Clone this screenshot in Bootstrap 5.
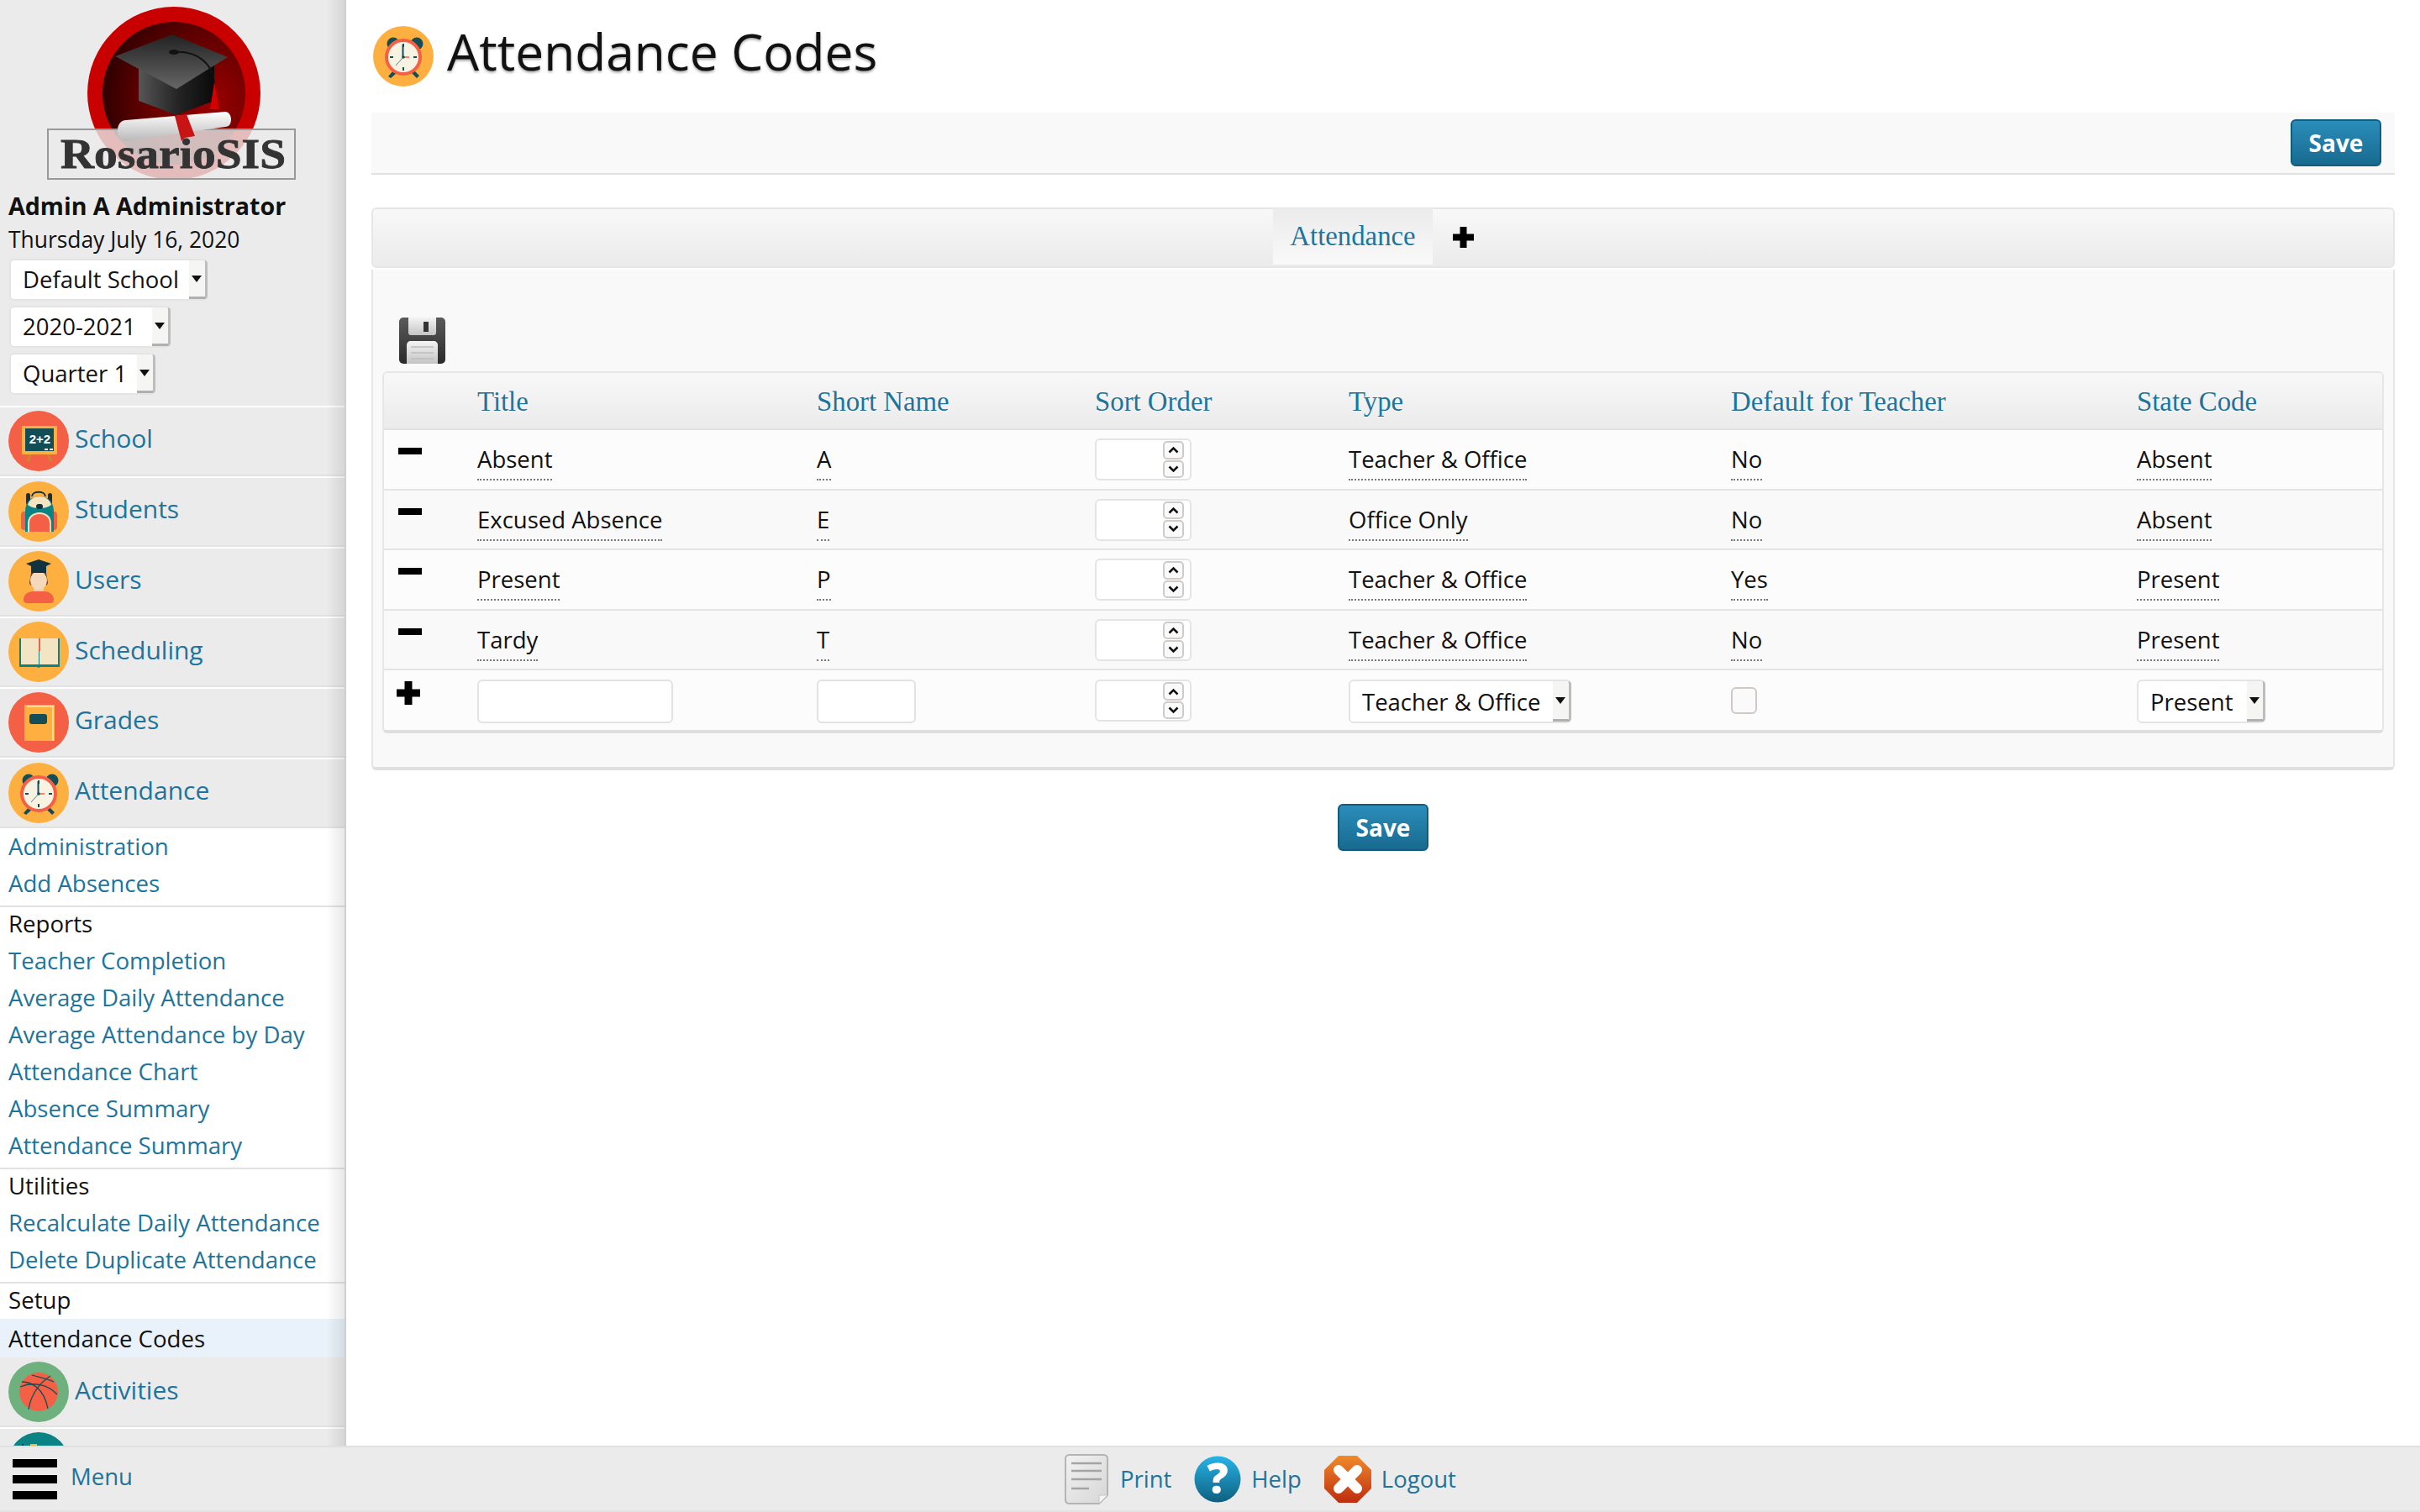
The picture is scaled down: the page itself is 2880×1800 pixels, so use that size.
<!DOCTYPE html>
<html lang="en">
<head>
  <meta charset="UTF-8">
  <title>Attendance Codes - RosarioSIS</title>
  <link rel="stylesheet" href="https://cdn.jsdelivr.net/npm/bootstrap@5.3.0/dist/css/bootstrap.min.css">
  <style>
    html, body { height: 100%; }
    body {
      background: #fff;
      color: #111;
      font-family: "Open Sans", "Liberation Sans", sans-serif;
      font-size: 27.5px;
      overflow: hidden;
    }
    a { color: #20749c; text-decoration: none; }
    .app-shell { height: 1800px; }
    .side-col {
      width: 412px;
      height: 1721px;
      background: #fff;
      position: relative;
      overflow: hidden;
      flex: none;
      border-right: 2px solid #cfcfcf;
    }
    .side-col::after {
      content: "";
      position: absolute;
      top: 0;
      bottom: 0;
      right: 0;
      width: 22px;
      background: linear-gradient(to right, rgba(0,0,0,0), rgba(0,0,0,.09));
    }
    .side-top { background: #ebebeb; height: 483px; }
    .logo-svg { display: block; }
    .admin-name { font-weight: 700; font-size: 28.6px; line-height: 40px; padding-left: 10px; margin-top: 3px; }
    .today-line { font-size: 26.4px; line-height: 40px; padding-left: 10px; margin-bottom: 3px; }
    .side-selects { padding-left: 11px; gap: 6px; }
    .sel-wrap { position: relative; }
    .sel-w-school { width: 236px; }
    .sel-w-year { width: 192px; }
    .sel-w-term { width: 174px; }
    .sel-w-type { width: 265px; }
    .sel-w-state { width: 153px; }
    select.form-select.sel-plain {
      appearance: none;
      background-image: none;
      background-color: #fff;
      border: 2px solid #e4e4e4;
      border-radius: 6px;
      color: #111;
      font-size: 27.5px;
      line-height: 1;
      height: 50px;
      width: 100%;
      padding: 0 24px 0 14px;
      box-shadow: none;
    }
    .sel-wrap.in-table select.form-select.sel-plain { height: 52px; }
    .sel-caret {
      position: absolute;
      top: 2px;
      right: 0;
      bottom: 2px;
      width: 22px;
      background: #f5f5f4;
      border-right: 3px solid #bdbdbd;
      border-bottom: 3px solid #b0b0b0;
      border-top-right-radius: 4px;
      border-bottom-right-radius: 4px;
      pointer-events: none;
    }
    .sel-caret::after {
      content: "";
      position: absolute;
      top: 42%;
      left: 3px;
      border-left: 6px solid transparent;
      border-right: 6px solid transparent;
      border-top: 8px solid #111;
    }
    .menu-head {
      height: 83.75px;
      background: #ebebeb;
      border-top: 2px solid #fff;
      border-bottom: 2px solid #e2e2e2;
      padding-left: 10px;
      font-size: 30px;
      gap: 7px;
    }
    .menu-head svg { width: 72px; height: 72px; flex: none; }
    .menu-head span { margin-bottom: 6px; }
    .menu-head.after-sub { border-top-color: #ebebeb; }
    .menu-sub { padding-bottom: 4px; background: #fff; }
    .menu-sub a, .menu-sub .menu-label {
      display: block;
      height: 44px;
      line-height: 43px;
      padding-left: 10px;
      font-size: 27.6px;
    }
    .menu-sub .menu-label {
      color: #111;
      border-top: 2px solid #e2e2e2;
      line-height: 39px;
    }
    .menu-sub a.is-current { background: #e9f2fa; color: #111; height: 46px; line-height: 46px; }
    .menu-sub.last-sub { padding-bottom: 0; }
    .main-col { padding: 0 30px; flex: 1 1 auto; min-width: 0; }
    .page-title { height: 134px; padding-left: 2px; gap: 16px; }
    .page-title svg { width: 72px; height: 72px; }
    .page-title h1 {
      font-size: 60.4px;
      font-weight: 400;
      margin: 0 0 12px;
      text-shadow: 0 2px 3px rgba(0,0,0,.35);
    }
    .top-bar {
      height: 74px;
      background: #f9f9f9;
      border-bottom: 2px solid #e2e2e2;
      padding-right: 16px;
    }
    .btn.save-btn {
      width: 108px;
      height: 56px;
      padding: 0;
      color: #fff;
      font-size: 28px;
      font-weight: 700;
      background: linear-gradient(#2b8dbb, #186a8f);
      border: 2px solid #125c7c;
      border-radius: 6px;
      line-height: 1;
    }
    .tab-strip {
      margin-top: 39px;
      height: 72px;
      background: linear-gradient(#f8f8f8, #ebebeb);
      border: 2px solid #e6e6e6;
      border-radius: 6px;
    }
    .tab-active {
      height: 67px;
      width: 190px;
      margin-top: -1px;
      background: linear-gradient(#ebebeb, #f9f9f9);
      font-family: "Liberation Serif", serif;
      font-size: 32.8px;
      line-height: 66px;
      text-align: center;
      text-shadow: 0 1px 0 #fff;
    }
    .tab-plus { padding: 21px 23px 0 24px; }
    .tab-plus svg { display: block; width: 25px; height: 25px; }
    .code-panel {
      margin-top: 2px;
      height: 596px;
      background: #f9f9f9;
      border: 2px solid #e6e6e6;
      border-top: 0;
      border-bottom: 4px solid #e0e0e0;
      border-radius: 0 0 6px 6px;
      padding: 57px 11px 0;
    }
    .disk-icon { display: block; width: 55px; height: 55px; margin-left: 20px; margin-bottom: 9px; }
    .code-wrap {
      border: 2px solid #e6e6e6;
      border-bottom: 4px solid #dedede;
      border-radius: 6px;
      overflow: hidden;
    }
    .code-table { table-layout: fixed; margin: 0; width: 100%; }
    .code-table .cw-1 { width: 95px; }
    .code-table .cw-2 { width: 404px; }
    .code-table .cw-3 { width: 331px; }
    .code-table .cw-4 { width: 302px; }
    .code-table .cw-5 { width: 455px; }
    .code-table .cw-6 { width: 483px; }
    .code-table th {
      height: 67px;
      padding: 3px 16px 0;
      vertical-align: middle;
      background: linear-gradient(#f8f8f8, #ebebeb);
      border-bottom: 2px solid #e2e2e2;
      color: #20749c;
      font-family: "Liberation Serif", serif;
      font-size: 32.8px;
      font-weight: 400;
      text-shadow: 0 1px 0 #fff;
    }
    .code-table td {
      height: 71.6px;
      padding: 14px 16px 0;
      vertical-align: top;
      font-size: 27.5px;
      color: #111;
      background: #f9f9f9;
      border-bottom: 2px solid #e4e4e4;
      box-shadow: none;
    }
    .code-table tr:nth-child(odd) td { background: #fbfcfb; }
    .code-table tr:last-child td { border-bottom: 0; padding-top: 11px; }
    .code-table td.cell-num { padding-top: 10px; }
    .code-table td.cell-act { padding: 21px 0 0 17px; }
    .code-table tr:last-child td.cell-act { padding: 13px 0 0 15px; }
    .dash-icon { display: block; width: 28px; height: 8px; background: #000; }
    .plus-icon { display: block; width: 28px; height: 28px; }
    .dot-val {
      display: inline-block;
      line-height: 38px;
      padding-bottom: 4px;
      border-bottom: 2px dotted #777;
    }
    .num-box {
      width: 115px;
      height: 50px;
      background: #fff;
      border: 2px solid #e4e4e4;
      border-radius: 6px;
      padding: 1px 7px 1px 0;
    }
    .num-box input { border: 0; background: transparent; width: 0; flex: 1 1 auto; outline: 0; }
    .spin-col { width: 25px; gap: 1px; }
    .spin-btn {
      height: 22px;
      border: 2px solid #cfcbc8;
      border-radius: 5px;
      background: #fafafa;
    }
    .spin-btn svg { width: 13px; height: 9px; }
    .text-in {
      display: block;
      height: 52px;
      background: #fff;
      border: 2px solid #e2e2e2;
      border-radius: 6px;
      outline: 0;
    }
    .text-in.wide { width: 233px; }
    .text-in.narrow { width: 118px; }
    .box-check {
      appearance: none;
      display: block;
      width: 31px;
      height: 32px;
      margin-top: 9px;
      background: #fbfafa;
      border: 2px solid #cfc9c6;
      border-radius: 6px;
    }
    .bottom-save { margin-top: 40px; }
    .foot-bar {
      position: relative;
      height: 79px;
      background: #ebebeb;
      border-top: 2px solid #e0e0e0;
      border-bottom: 2px solid #e4e4e4;
      font-size: 27.5px;
    }
    .burger { width: 53px; margin-left: 15px; gap: 9px; }
    .burger span { display: block; height: 10px; background: #000; }
    .foot-menu { margin-left: 16px; margin-top: -6px; }
    .foot-links { margin-left: 1109px; }
    .foot-links a { gap: 12px; }
    .foot-links a + a { margin-left: 27px; }
    .foot-links .ic-print { width: 52px; height: 60px; margin-right: 2px; }
    .foot-links .ic-round { width: 56px; height: 56px; overflow: visible; }
  </style>
</head>
<body>
  <svg width="0" height="0" class="position-absolute">
    <defs>
      <symbol id="ic-school" viewBox="0 0 72 72">
        <circle cx="36" cy="36" r="36" fill="#f46046"/>
        <path d="M24 52l-2 8h3l2-8zM46 52l3 8h3l-3-8z" fill="#c98a2a"/>
        <rect x="16" y="18" width="42" height="34" rx="1" fill="#fdb03f"/>
        <rect x="20" y="21" width="34" height="27" fill="#134e57"/>
        <text x="37.500" y="39" text-anchor="middle" font-family="Liberation Sans" font-weight="700" font-size="15" fill="#fff">2+2</text>
        <rect x="43" y="45" width="4" height="2" fill="#fff"/><rect x="49" y="45" width="4" height="2" fill="#fff"/>
      </symbol>
      <symbol id="ic-students" viewBox="0 0 72 72">
        <circle cx="36" cy="36" r="36" fill="#fdb03f"/>
        <path d="M28 18c0-7 16-7 16 0" fill="none" stroke="#10333f" stroke-width="2"/>
        <rect x="15" y="36" width="9" height="22" rx="4" fill="#f46046"/><rect x="49" y="36" width="9" height="22" rx="4" fill="#f46046"/>
        <rect x="21" y="14" width="5" height="14" rx="2.5" fill="#10333f"/><rect x="47" y="14" width="5" height="14" rx="2.5" fill="#10333f"/>
        <path d="M20 60V36c0-12 7-18 17-18s17 6 17 18v24z" fill="#0b8384"/>
        <path d="M23 28c2-7 8-10 14-10s12 3 14 10c-4 3-9 4-14 4s-10-1-14-4z" fill="#f3e4c3"/>
        <rect x="33" y="27" width="8" height="6" rx="3" fill="#10333f"/>
        <path d="M23 60V50c0-8 6-13 14-13s14 5 14 13v10z" fill="#f3e4c3"/>
        <path d="M25 60V50c0-7 5-11 12-11s12 4 12 11v10z" fill="#f46046"/>
      </symbol>
      <symbol id="ic-users" viewBox="0 0 72 72">
        <circle cx="36" cy="36" r="36" fill="#fdb03f"/>
        <path d="M18 58c0-7 6-10 12-10h12c6 0 12 3 12 10 0 3-2 4-4 4H22c-2 0-4-1-4-4z" fill="#f46046"/>
        <rect x="30" y="42" width="12" height="6" fill="#e9cdb0"/>
        <path d="M27 26h18l2 12c-1 3-2 3-3 2H28c-1 1-2 1-3-2z" fill="#6a3f2c"/>
        <ellipse cx="36" cy="35" rx="10" ry="11" fill="#f6d9bb"/>
        <path d="M21 15l15-5 15 5-6 3v8H27v-8z" fill="#10333f"/>
      </symbol>
      <symbol id="ic-book" viewBox="0 0 72 72">
        <circle cx="36" cy="36" r="36" fill="#fdb03f"/>
        <path d="M13 20h48v34H38l-2 1-2-1H13z" fill="#0b8384"/>
        <rect x="15" y="20" width="21" height="31" fill="#f3e4c3"/>
        <rect x="37" y="20" width="22" height="31" fill="#f3e4c3"/>
        <rect x="36" y="20" width="2" height="15" fill="#f46046"/>
      </symbol>
      <symbol id="ic-grades" viewBox="0 0 72 72">
        <circle cx="36" cy="36" r="36" fill="#f46046"/>
        <rect x="19" y="15" width="36" height="43" fill="#fdb03f"/>
        <path d="M22 17h31v41" fill="none" stroke="#f8e3b8" stroke-width="1.5"/>
        <rect x="25" y="26" width="21" height="12" rx="3" fill="#134e57"/>
      </symbol>
      <symbol id="ic-clock" viewBox="0 0 72 72">
        <circle cx="36" cy="36" r="36" fill="#fdb03f"/>
        <circle cx="24" cy="21" r="7.5" fill="#134e57"/><circle cx="52" cy="21" r="7.5" fill="#134e57"/>
        <path d="M24 53l-6 7 3 2 7-6zM46 56l6 6 3-3-6-6z" fill="#134e57"/>
        <circle cx="36" cy="37" r="20" fill="#f8f2e3" stroke="#f46046" stroke-width="4"/>
        <path d="M36 21v4M36 49v4M20 37h4M48 37h4" stroke="#134e57" stroke-width="2"/>
        <path d="M35.500 22v15" stroke="#134e57" stroke-width="2"/>
        <path d="M36 37l-9 10" stroke="#134e57" stroke-width=".7"/>
        <path d="M36 37h7" stroke="#f46046" stroke-width="1.500"/>
        <circle cx="36" cy="37" r="1.800" fill="#134e57"/>
      </symbol>
      <symbol id="ic-ball" viewBox="0 0 72 72">
        <circle cx="36" cy="36" r="36" fill="#6fb07f"/>
        <circle cx="36" cy="36" r="23" fill="#f46046"/>
        <g fill="none" stroke="#134e57" stroke-width="1.300">
          <path d="M14 30c14-6 32-4 44 9"/>
          <path d="M16 24c10 0 26 6 31 32"/>
          <path d="M24 57c2-14 10-30 26-40"/>
          <path d="M28 16c6 2 18 4 26 8"/>
        </g>
      </symbol>
      <symbol id="ic-teal" viewBox="0 0 72 72">
        <circle cx="36" cy="36" r="36" fill="#0b8384"/>
        <rect x="26" y="14" width="8" height="10" fill="#fdb03f"/>
        <rect x="16" y="14" width="2" height="10" fill="#10333f"/>
      </symbol>
      <linearGradient id="g-disk" x1="0" y1="0" x2="0" y2="1"><stop offset="0" stop-color="#5a5a5a"/><stop offset="1" stop-color="#2a2a2a"/></linearGradient>
      <linearGradient id="g-label" x1="0" y1="0" x2="0" y2="1"><stop offset="0" stop-color="#f4f4f4"/><stop offset="1" stop-color="#c4c4c4"/></linearGradient>
      <linearGradient id="g-help" x1="0" y1="0" x2="0" y2="1"><stop offset="0" stop-color="#27b3e6"/><stop offset="1" stop-color="#0f5f80"/></linearGradient>
      <linearGradient id="g-quit" x1="0" y1="0" x2="0" y2="1"><stop offset="0" stop-color="#f18a2a"/><stop offset="1" stop-color="#bd2d10"/></linearGradient>
      <linearGradient id="g-page" x1="0" y1="0" x2="1" y2="1"><stop offset="0" stop-color="#f2f2f2"/><stop offset="1" stop-color="#d6d6d6"/></linearGradient>
      <radialGradient id="g-logo" cx=".75" cy=".55" r=".85"><stop offset="0" stop-color="#9c0000"/><stop offset=".6" stop-color="#5a0000"/><stop offset="1" stop-color="#1e0000"/></radialGradient>
      <linearGradient id="g-scroll" x1="0" y1="0" x2="0" y2="1"><stop offset="0" stop-color="#fff"/><stop offset="1" stop-color="#b9b9b9"/></linearGradient>
      <linearGradient id="g-cap" x1="0" y1="0" x2="0" y2="1"><stop offset="0" stop-color="#222"/><stop offset="1" stop-color="#666"/></linearGradient>
      <linearGradient id="g-base" x1="0" y1="0" x2="1" y2="0"><stop offset="0" stop-color="#555"/><stop offset=".55" stop-color="#222"/><stop offset="1" stop-color="#0a0a0a"/></linearGradient>
    </defs>
  </svg>

  <div class="app-shell d-flex flex-column">
    <div class="d-flex flex-grow-1" style="min-height:0">
      <!-- left menu -->
      <aside class="side-col">
        <div class="side-top">
          <svg class="logo-svg" width="410" height="222" viewBox="0 0 410 222">
            <circle cx="207" cy="111" r="103" fill="#c90000"/>
            <circle cx="207" cy="111" r="85" fill="url(#g-logo)"/>
            <path d="M165 78h90v42l-45 17-45-17z" fill="url(#g-base)"/>
            <path d="M137 67l68-26 66 27-61 38z" fill="url(#g-cap)"/>
            <path d="M207 62c28-2 47 14 48 38" fill="none" stroke="#111" stroke-width="2"/>
            <ellipse cx="207" cy="62" rx="6" ry="3" fill="#111"/>
            <path d="M255 98l-5 32h11z" fill="#d40000"/>
            <rect x="57" y="154" width="294" height="59" fill="#ebebeb" fill-opacity=".8" stroke="#999" stroke-width="2"/>
            <path d="M150 143l118-10c4 0 7 4 7 9s-2 9-7 9l-118 17c-6 0-10-6-10-13s4-12 10-12z" fill="url(#g-scroll)"/>
            <path d="M208 138l14-2 10 26-12 2-4 4z" fill="#c81414"/>
            <text x="206" y="200" text-anchor="middle" font-family="Liberation Serif" font-weight="700" font-size="50" fill="#333" stroke="#333" stroke-width=".8" textLength="268" lengthAdjust="spacingAndGlyphs">RosarioSIS</text>
          </svg>
          <div class="admin-name">Admin A Administrator</div>
          <div class="today-line">Thursday July 16, 2020</div>
          <div class="side-selects d-flex flex-column">
            <div class="sel-wrap sel-w-school"><select class="form-select sel-plain"><option>Default School</option></select><span class="sel-caret"></span></div>
            <div class="sel-wrap sel-w-year"><select class="form-select sel-plain"><option>2020-2021</option></select><span class="sel-caret"></span></div>
            <div class="sel-wrap sel-w-term"><select class="form-select sel-plain"><option>Quarter 1</option></select><span class="sel-caret"></span></div>
          </div>
        </div>
        <a class="menu-head d-flex align-items-center" href="#"><svg><use href="#ic-school"/></svg><span>School</span></a>
        <a class="menu-head d-flex align-items-center" href="#"><svg><use href="#ic-students"/></svg><span>Students</span></a>
        <a class="menu-head d-flex align-items-center" href="#"><svg><use href="#ic-users"/></svg><span>Users</span></a>
        <a class="menu-head d-flex align-items-center" href="#"><svg><use href="#ic-book"/></svg><span>Scheduling</span></a>
        <a class="menu-head d-flex align-items-center" href="#"><svg><use href="#ic-grades"/></svg><span>Grades</span></a>
        <a class="menu-head d-flex align-items-center" href="#"><svg><use href="#ic-clock"/></svg><span>Attendance</span></a>
        <div class="menu-sub">
          <a href="#">Administration</a>
          <a href="#">Add Absences</a>
        </div>
        <div class="menu-sub">
          <div class="menu-label">Reports</div>
          <a href="#">Teacher Completion</a>
          <a href="#">Average Daily Attendance</a>
          <a href="#">Average Attendance by Day</a>
          <a href="#">Attendance Chart</a>
          <a href="#">Absence Summary</a>
          <a href="#">Attendance Summary</a>
        </div>
        <div class="menu-sub">
          <div class="menu-label">Utilities</div>
          <a href="#">Recalculate Daily Attendance</a>
          <a href="#">Delete Duplicate Attendance</a>
        </div>
        <div class="menu-sub last-sub">
          <div class="menu-label">Setup</div>
          <a class="is-current" href="#">Attendance Codes</a>
        </div>
        <a class="menu-head after-sub d-flex align-items-center" href="#"><svg><use href="#ic-ball"/></svg><span>Activities</span></a>
        <a class="menu-head d-flex align-items-center" href="#"><svg><use href="#ic-teal"/></svg></a>
      </aside>

      <!-- page content -->
      <main class="main-col">
        <div class="page-title d-flex align-items-center">
          <svg><use href="#ic-clock"/></svg>
          <h1>Attendance Codes</h1>
        </div>
        <div class="top-bar d-flex align-items-center justify-content-end">
          <button type="button" class="btn save-btn">Save</button>
        </div>

        <div class="tab-strip nav justify-content-center">
          <a class="tab-active" href="#">Attendance</a>
          <a class="tab-plus" href="#">
            <svg viewBox="0 0 25 25"><path d="M8.500 0h8v8.500H25v8h-8.500V25h-8v-8.500H0v-8h8.500z" fill="#000"/></svg>
          </a>
        </div>
        <div class="code-panel">
          <svg class="disk-icon" viewBox="0 0 55 55">
            <rect width="55" height="55" rx="5" fill="url(#g-disk)"/>
            <path d="M11 0h33v18c0 2-1 3-3 3H14c-2 0-3-1-3-3z" fill="url(#g-label)"/>
            <rect x="29" y="5" width="6" height="12" fill="#333"/>
            <path d="M9 55V33c0-3 2-5 5-5h27c3 0 5 2 5 5v22z" fill="url(#g-label)"/>
            <path d="M14 35h27M14 42h27M14 49h27" stroke="#bdbdbd" stroke-width="1.500"/>
          </svg>
          <div class="code-wrap">
            <table class="table code-table">
              <colgroup>
                <col class="cw-1"><col class="cw-2"><col class="cw-3"><col class="cw-4"><col class="cw-5"><col class="cw-6"><col>
              </colgroup>
              <thead>
                <tr><th></th><th>Title</th><th>Short Name</th><th>Sort Order</th><th>Type</th><th>Default for Teacher</th><th>State Code</th></tr>
              </thead>
              <tbody>
                <tr>
                  <td class="cell-act"><a href="#" class="dash-icon"></a></td>
                  <td><span class="dot-val">Absent</span></td>
                  <td><span class="dot-val">A</span></td>
                  <td class="cell-num"><div class="num-box d-flex"><input type="text"><div class="spin-col d-flex flex-column"><span class="spin-btn d-flex align-items-center justify-content-center"><svg viewBox="0 0 13 9"><path d="M1.500 7.500l5-5 5 5" fill="none" stroke="#111" stroke-width="2.500"/></svg></span><span class="spin-btn d-flex align-items-center justify-content-center"><svg viewBox="0 0 13 9"><path d="M1.500 1.500l5 5 5-5" fill="none" stroke="#111" stroke-width="2.500"/></svg></span></div></div></td>
                  <td><span class="dot-val">Teacher &amp; Office</span></td>
                  <td><span class="dot-val">No</span></td>
                  <td><span class="dot-val">Absent</span></td>
                </tr>
                <tr>
                  <td class="cell-act"><a href="#" class="dash-icon"></a></td>
                  <td><span class="dot-val">Excused Absence</span></td>
                  <td><span class="dot-val">E</span></td>
                  <td class="cell-num"><div class="num-box d-flex"><input type="text"><div class="spin-col d-flex flex-column"><span class="spin-btn d-flex align-items-center justify-content-center"><svg viewBox="0 0 13 9"><path d="M1.500 7.500l5-5 5 5" fill="none" stroke="#111" stroke-width="2.500"/></svg></span><span class="spin-btn d-flex align-items-center justify-content-center"><svg viewBox="0 0 13 9"><path d="M1.500 1.500l5 5 5-5" fill="none" stroke="#111" stroke-width="2.500"/></svg></span></div></div></td>
                  <td><span class="dot-val">Office Only</span></td>
                  <td><span class="dot-val">No</span></td>
                  <td><span class="dot-val">Absent</span></td>
                </tr>
                <tr>
                  <td class="cell-act"><a href="#" class="dash-icon"></a></td>
                  <td><span class="dot-val">Present</span></td>
                  <td><span class="dot-val">P</span></td>
                  <td class="cell-num"><div class="num-box d-flex"><input type="text"><div class="spin-col d-flex flex-column"><span class="spin-btn d-flex align-items-center justify-content-center"><svg viewBox="0 0 13 9"><path d="M1.500 7.500l5-5 5 5" fill="none" stroke="#111" stroke-width="2.500"/></svg></span><span class="spin-btn d-flex align-items-center justify-content-center"><svg viewBox="0 0 13 9"><path d="M1.500 1.500l5 5 5-5" fill="none" stroke="#111" stroke-width="2.500"/></svg></span></div></div></td>
                  <td><span class="dot-val">Teacher &amp; Office</span></td>
                  <td><span class="dot-val">Yes</span></td>
                  <td><span class="dot-val">Present</span></td>
                </tr>
                <tr>
                  <td class="cell-act"><a href="#" class="dash-icon"></a></td>
                  <td><span class="dot-val">Tardy</span></td>
                  <td><span class="dot-val">T</span></td>
                  <td class="cell-num"><div class="num-box d-flex"><input type="text"><div class="spin-col d-flex flex-column"><span class="spin-btn d-flex align-items-center justify-content-center"><svg viewBox="0 0 13 9"><path d="M1.500 7.500l5-5 5 5" fill="none" stroke="#111" stroke-width="2.500"/></svg></span><span class="spin-btn d-flex align-items-center justify-content-center"><svg viewBox="0 0 13 9"><path d="M1.500 1.500l5 5 5-5" fill="none" stroke="#111" stroke-width="2.500"/></svg></span></div></div></td>
                  <td><span class="dot-val">Teacher &amp; Office</span></td>
                  <td><span class="dot-val">No</span></td>
                  <td><span class="dot-val">Present</span></td>
                </tr>
                <tr>
                  <td class="cell-act"><svg class="plus-icon" viewBox="0 0 28 28"><path d="M9.500 0h9v9.500H28v9h-9.500V28h-9v-9.500H0v-9h9.500z" fill="#000"/></svg></td>
                  <td><input type="text" class="text-in wide"></td>
                  <td><input type="text" class="text-in narrow"></td>
                  <td><div class="num-box d-flex"><input type="text"><div class="spin-col d-flex flex-column"><span class="spin-btn d-flex align-items-center justify-content-center"><svg viewBox="0 0 13 9"><path d="M1.500 7.500l5-5 5 5" fill="none" stroke="#111" stroke-width="2.500"/></svg></span><span class="spin-btn d-flex align-items-center justify-content-center"><svg viewBox="0 0 13 9"><path d="M1.500 1.500l5 5 5-5" fill="none" stroke="#111" stroke-width="2.500"/></svg></span></div></div></td>
                  <td><div class="sel-wrap in-table sel-w-type"><select class="form-select sel-plain"><option>Teacher &amp; Office</option></select><span class="sel-caret"></span></div></td>
                  <td><input type="checkbox" class="box-check"></td>
                  <td><div class="sel-wrap in-table sel-w-state"><select class="form-select sel-plain"><option>Present</option></select><span class="sel-caret"></span></div></td>
                </tr>
              </tbody>
            </table>
          </div>
        </div>
        <div class="bottom-save text-center"><button type="button" class="btn save-btn">Save</button></div>
      </main>
    </div>

    <!-- bottom bar -->
    <footer class="foot-bar d-flex align-items-center">
      <div class="burger d-flex flex-column"><span></span><span></span><span></span></div>
      <a class="foot-menu" href="#">Menu</a>
      <div class="foot-links d-flex align-items-center">
        <a class="d-flex align-items-center" href="#">
          <svg class="ic-print" viewBox="0 0 52 60">
            <path d="M5 1h42c2 0 4 2 4 4v44L41 59H5c-2 0-4-2-4-4V5c0-2 2-4 4-4z" fill="url(#g-page)" stroke="#b4b4b4" stroke-width="2"/>
            <path d="M41 59V49h10z" fill="#f5f5f5" stroke="#c4c4c4"/>
            <path d="M8 11h36M8 20h36M8 30h36" stroke="#a4a4a4" stroke-width="2.500"/><path d="M8 41h21" stroke="#a4a4a4" stroke-width="2.500"/>
          </svg>
          Print
        </a>
        <a class="d-flex align-items-center" href="#">
          <svg class="ic-round" viewBox="0 0 56 56">
            <circle cx="28" cy="28" r="27.500" fill="url(#g-help)"/>
            <text x="28" y="45" text-anchor="middle" font-family="Open Sans" font-weight="800" font-size="50" fill="#fff">?</text>
          </svg>
          Help
        </a>
        <a class="d-flex align-items-center" href="#">
          <svg class="ic-round" viewBox="0 0 56 56">
            <path d="M17 0h22l17 17v22L39 56H17L0 39V17z" fill="url(#g-quit)"/>
            <path d="M17 17l22 22M39 17L17 39" stroke="#fff" stroke-width="12" stroke-linecap="round"/>
          </svg>
          Logout
        </a>
      </div>
    </footer>
  </div>
</body>
</html>
